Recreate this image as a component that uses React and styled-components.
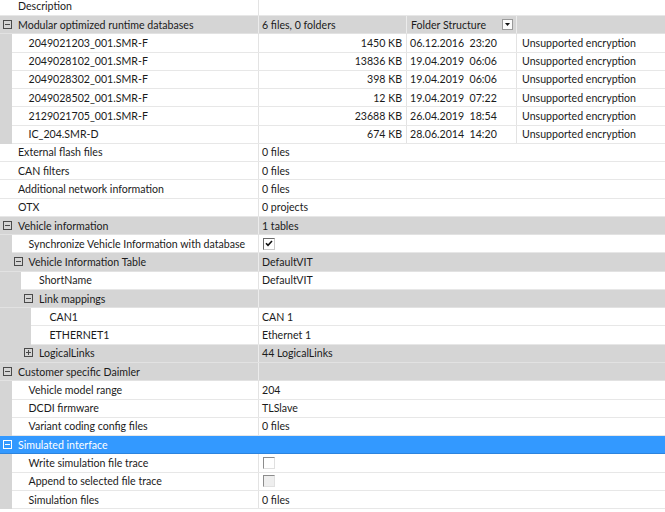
import React from "react";
import styled, { createGlobalStyle, css } from "styled-components";

const Global = createGlobalStyle`
  html, body { margin: 0; padding: 0; background: #ffffff; }
  body { font-family: "Lato", "Noto Sans", "Liberation Sans", sans-serif; font-size: 10.6px; color: #1b1b1b; overflow: hidden; }
`;

const ROW_H = 18.27;
const NAME_W = 258;
const GUTTERS = [0, 12, 21, 31];
const textLeft = (level) => 18 + 10.5 * level;

const Grid = styled.div`
  width: 665px;
  margin-top: -2.3px;
  display: flex;
  flex-direction: column;
`;

const Row = styled.div`
  height: ${ROW_H}px;
  display: flex;
  box-sizing: border-box;
  background: #ffffff;
  ${(p) =>
    p.$variant === "category" &&
    css`
      background: #d5d5d5;
    `}
  ${(p) =>
    p.$variant === "selected" &&
    css`
      background: #3399ff;
      color: #ffffff;
    `}
`;

const Gutter = styled.div`
  width: ${(p) => p.$w}px;
  flex: none;
  background: #d5d5d5;
`;

const Main = styled.div`
  flex: 1;
  display: flex;
  box-sizing: border-box;
  border-bottom: 1px solid
    ${(p) => (p.$variant === "item" ? "#e7e7e7" : p.$variant === "selected" ? "#2c84de" : "#e2e2e2")};
`;

const NameCell = styled.div`
  width: ${(p) => p.$w}px;
  flex: none;
  display: flex;
  align-items: center;
  position: relative;
  padding-left: ${(p) => p.$pad}px;
  box-sizing: border-box;
  white-space: nowrap;
  overflow: hidden;
`;

const Expander = styled.svg`
  position: absolute;
  left: ${(p) => p.$left}px;
  top: 50%;
  margin-top: -5px;
  width: 9px;
  height: 9px;
`;

const ValueCell = styled.div`
  flex: ${(p) => (p.$w ? "none" : "1")};
  width: ${(p) => (p.$w ? `${p.$w}px` : "auto")};
  display: flex;
  align-items: center;
  justify-content: ${(p) => (p.$right ? "flex-end" : "flex-start")};
  padding: 0 ${(p) => (p.$right ? 4 : 0)}px 0 ${(p) => p.$padL ?? 3}px;
  box-sizing: border-box;
  border-left: 1px solid
    ${(p) => (p.$variant === "item" ? "#e3e3e3" : p.$variant === "selected" ? "#3399ff" : "#ececec")};
  white-space: nowrap;
  overflow: hidden;
  gap: 4px;
`;

const HeaderLabel = styled.span`
  flex: 1;
`;

const DropButton = styled.span`
  width: 11px;
  height: 11px;
  box-sizing: border-box;
  border: 1px solid #9a9a9a;
  background: #fbfbfb;
  display: flex;
  align-items: center;
  justify-content: center;
  margin-right: 3px;
`;

const Check = styled.span`
  width: 12px;
  height: 12px;
  box-sizing: border-box;
  display: flex;
  align-items: center;
  justify-content: center;
  margin-left: 1px;
  border: 1px solid;
  border-color: ${(p) => (p.$state === "checked" ? "#6b6b6b #c9c9c9 #c9c9c9 #6b6b6b" : "#8c8c8c #e0e0e0 #e0e0e0 #8c8c8c")};
  background: ${(p) => (p.$state === "disabled" ? "#eeeeee" : "#ffffff")};
`;

function ExpandIcon({ left, collapsed, light }) {
  const c = light ? "#ffffff" : "#4a4a4a";
  return (
    <Expander $left={left} viewBox="0 0 9 9">
      <rect x="0.5" y="0.5" width="8" height="8" fill="none" stroke={c} strokeWidth="1" />
      <line x1="2" y1="4.5" x2="7" y2="4.5" stroke={c} strokeWidth="1" />
      {collapsed && <line x1="4.5" y1="2" x2="4.5" y2="7" stroke={c} strokeWidth="1" />}
    </Expander>
  );
}

const files = [
  ["2049021203_001.SMR-F", "1450 KB", "06.12.2016  23:20"],
  ["2049028102_001.SMR-F", "13836 KB", "19.04.2019  06:06"],
  ["2049028302_001.SMR-F", "398 KB", "19.04.2019  06:06"],
  ["2049028502_001.SMR-F", "12 KB", "19.04.2019  07:22"],
  ["2129021705_001.SMR-F", "23688 KB", "26.04.2019  18:54"],
  ["IC_204.SMR-D", "674 KB", "28.06.2014  14:20"],
];

const rows = [
  { kind: "item", level: 0, name: "Description", value: "" },
  { kind: "category", level: 0, name: "Modular optimized runtime databases", header: true },
  ...files.map(([n, s, d]) => ({ kind: "item", level: 1, name: n, file: { size: s, date: d } })),
  { kind: "item", level: 0, name: "External flash files", value: "0 files" },
  { kind: "item", level: 0, name: "CAN filters", value: "0 files" },
  { kind: "item", level: 0, name: "Additional network information", value: "0 files" },
  { kind: "item", level: 0, name: "OTX", value: "0 projects" },
  { kind: "category", level: 0, name: "Vehicle information", value: "1 tables" },
  { kind: "item", level: 1, name: "Synchronize Vehicle Information with database", check: "checked" },
  { kind: "category", level: 1, name: "Vehicle Information Table", value: "DefaultVIT" },
  { kind: "item", level: 2, name: "ShortName", value: "DefaultVIT" },
  { kind: "category", level: 2, name: "Link mappings", value: "" },
  { kind: "item", level: 3, name: "CAN1", value: "CAN 1" },
  { kind: "item", level: 3, name: "ETHERNET1", value: "Ethernet 1" },
  { kind: "category", level: 2, name: "LogicalLinks", value: "44 LogicalLinks", collapsed: true },
  { kind: "category", level: 0, name: "Customer specific Daimler", value: "" },
  { kind: "item", level: 1, name: "Vehicle model range", value: "204" },
  { kind: "item", level: 1, name: "DCDI firmware", value: "TLSlave" },
  { kind: "item", level: 1, name: "Variant coding config files", value: "0 files" },
  { kind: "selected", level: 0, name: "Simulated interface", value: "" },
  { kind: "item", level: 1, name: "Write simulation file trace", check: "unchecked" },
  { kind: "item", level: 1, name: "Append to selected file trace", check: "disabled" },
  { kind: "item", level: 1, name: "Simulation files", value: "0 files" },
];

function CheckMark() {
  return (
    <svg width="8" height="7" viewBox="0 0 8 7">
      <path d="M1 3.2 L3 5.3 L7 1" fill="none" stroke="#111" strokeWidth="1.6" />
    </svg>
  );
}

function PropRow({ r }) {
  const isItem = r.kind === "item";
  const gutter = isItem ? GUTTERS[r.level] : 0;
  const pad = textLeft(r.level) - gutter;
  const v = r.kind;

  let values;
  if (r.header) {
    values = (
      <>
        <ValueCell $variant={v} $w={148}>6 files, 0 folders</ValueCell>
        <ValueCell $variant={v} $w={110} $padL={4}>
          <HeaderLabel>Folder Structure</HeaderLabel>
          <DropButton>
            <svg width="5" height="3" viewBox="0 0 5 3">
              <path d="M0 0 H5 L2.5 3 Z" fill="#111" />
            </svg>
          </DropButton>
        </ValueCell>
        <ValueCell $variant={v} />
      </>
    );
  } else if (r.file) {
    values = (
      <>
        <ValueCell $variant={v} $w={148} $right>{r.file.size}</ValueCell>
        <ValueCell $variant={v} $w={110} $padL={3} style={{ whiteSpace: "pre" }}>
          {r.file.date}
        </ValueCell>
        <ValueCell $variant={v} $padL={5}>Unsupported encryption</ValueCell>
      </>
    );
  } else if (r.check) {
    values = (
      <ValueCell $variant={v}>
        <Check $state={r.check}>{r.check === "checked" && <CheckMark />}</Check>
      </ValueCell>
    );
  } else {
    values = <ValueCell $variant={v}>{r.value}</ValueCell>;
  }

  return (
    <Row $variant={v}>
      {gutter > 0 && <Gutter $w={gutter} />}
      <Main $variant={v}>
        <NameCell $w={NAME_W - gutter} $pad={pad}>
          {!isItem && (
            <ExpandIcon left={3 + 10.5 * r.level} collapsed={r.collapsed} light={v === "selected"} />
          )}
          {r.name}
        </NameCell>
        {values}
      </Main>
    </Row>
  );
}

export default function App() {
  return (
    <>
      <Global />
      <Grid>
        {rows.map((r, i) => (
          <PropRow key={i} r={r} />
        ))}
      </Grid>
    </>
  );
}
